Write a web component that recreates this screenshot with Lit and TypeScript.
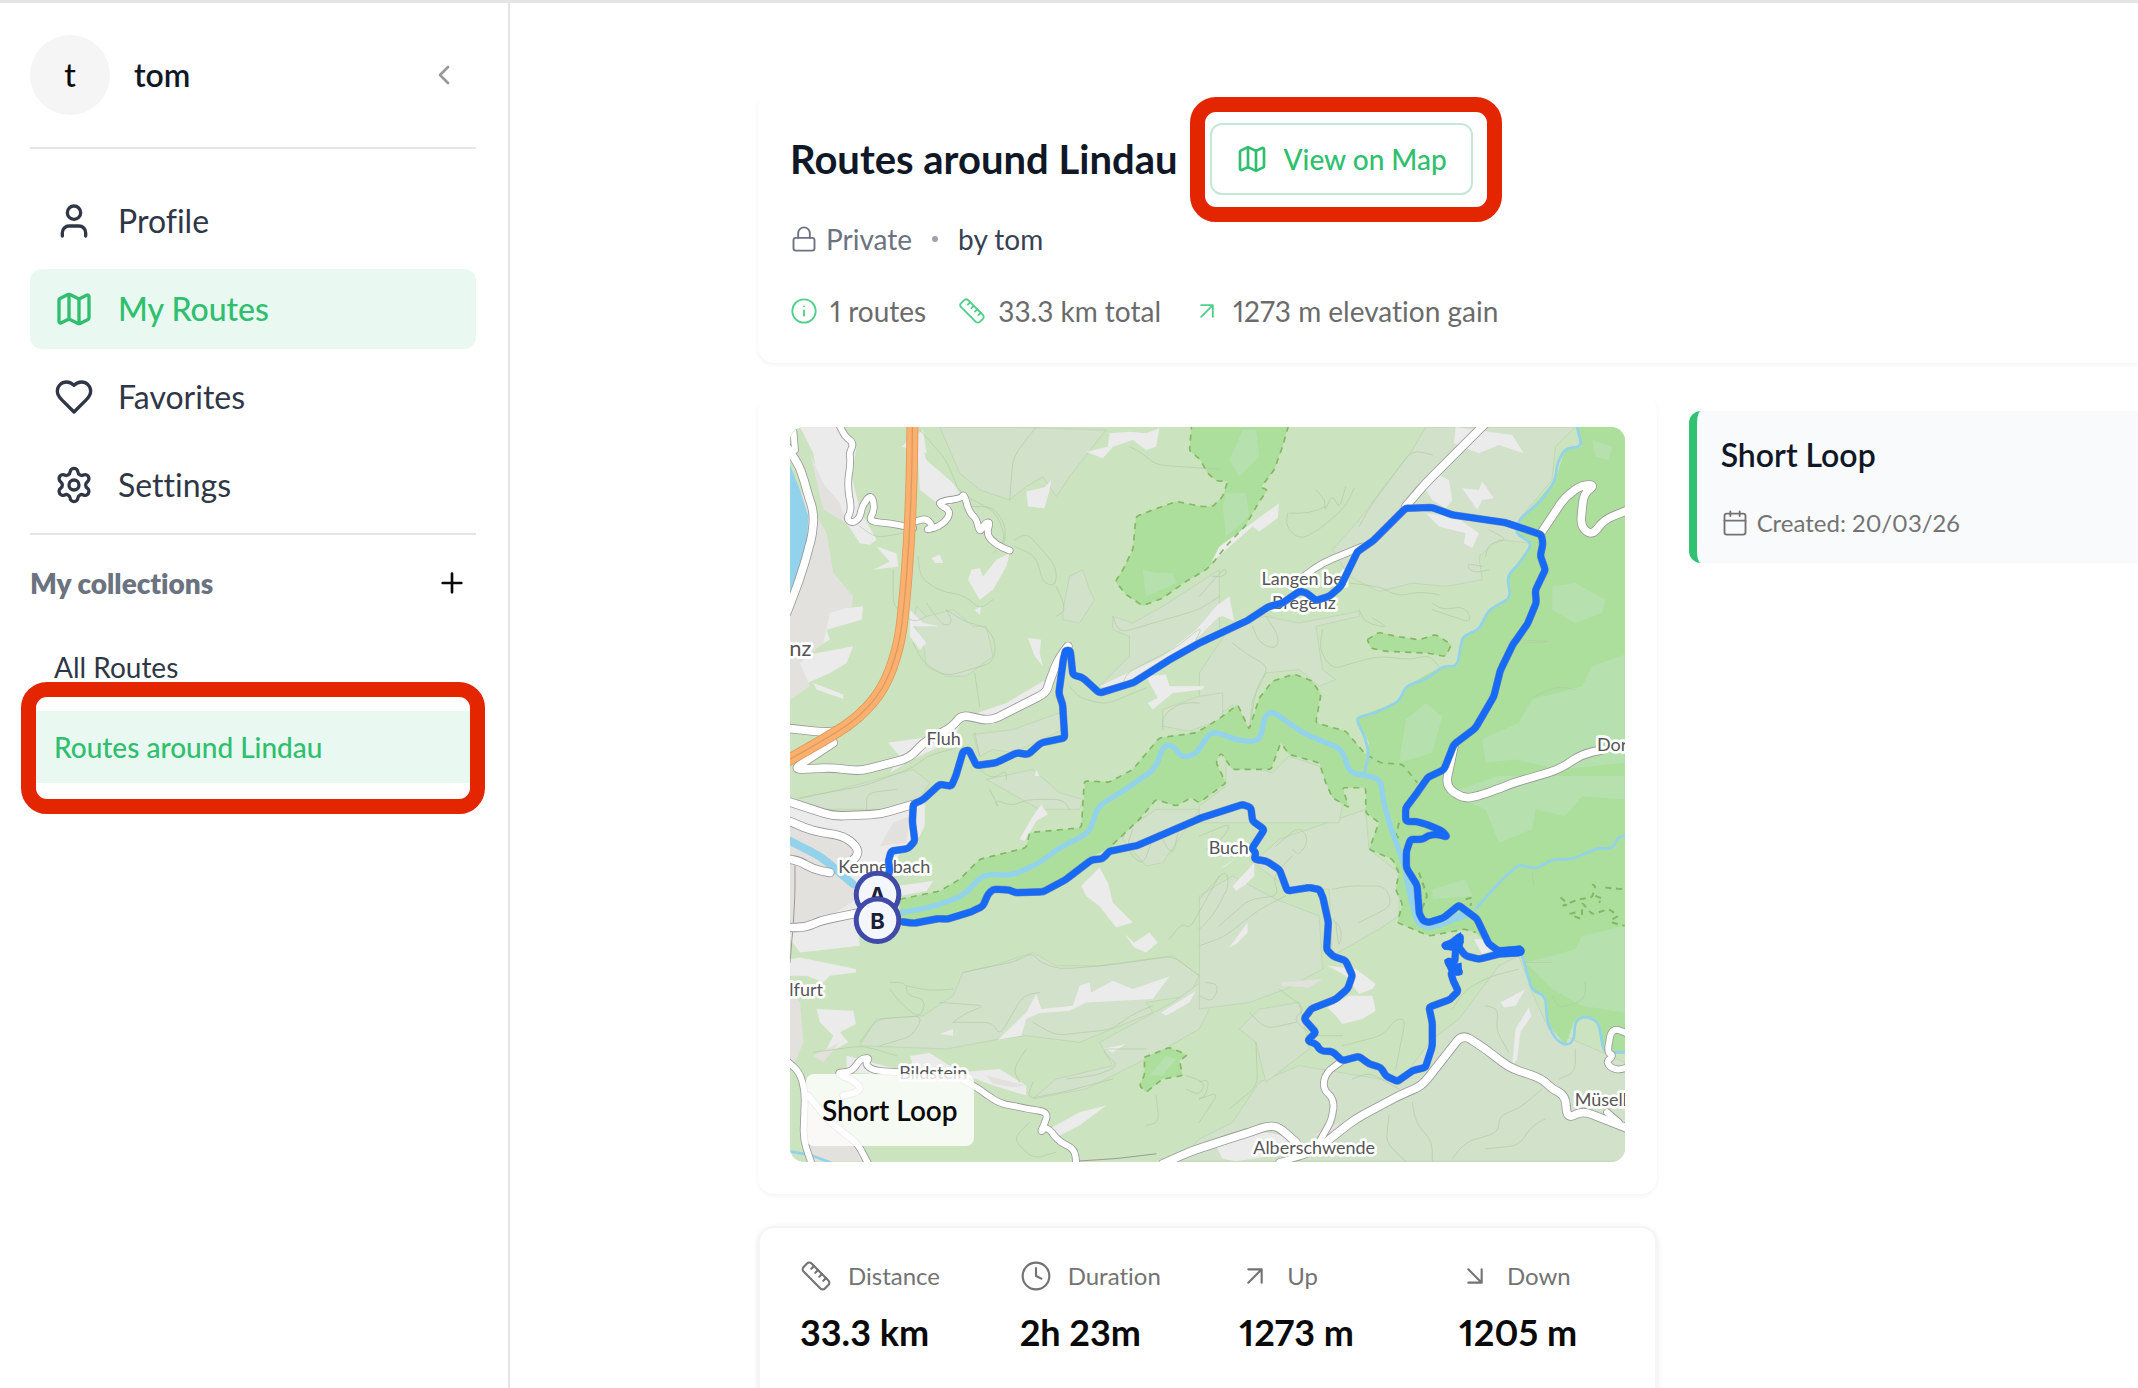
import { LitElement, html, svg, css } from "lit";
import { customElement, property } from "lit/decorators.js";

/* ---------- icons ---------- */

const ICONS = {
  user: svg`<path d="M19 21v-2a4 4 0 0 0-4-4H9a4 4 0 0 0-4 4v2"/><circle cx="12" cy="7" r="4"/>`,
  map: svg`<path d="M14.106 5.553a2 2 0 0 0 1.788 0l3.659-1.83A1 1 0 0 1 21 4.619v12.764a1 1 0 0 1-.553.894l-4.553 2.277a2 2 0 0 1-1.788 0l-4.212-2.106a2 2 0 0 0-1.788 0l-3.659 1.83A1 1 0 0 1 3 19.381V6.618a1 1 0 0 1 .553-.894l4.553-2.277a2 2 0 0 1 1.788 0z"/><path d="M15 5.764v15M9 3.236v15"/>`,
  heart: svg`<path d="M19 14c1.49-1.46 3-3.21 3-5.5A5.5 5.5 0 0 0 16.5 3c-1.76 0-3 .5-4.5 2-1.5-1.5-2.74-2-4.5-2A5.5 5.5 0 0 0 2 8.5c0 2.3 1.5 4.05 3 5.5l7 7Z"/>`,
  settings: svg`<path d="M9.671 4.136a2.34 2.34 0 0 1 4.659 0 2.34 2.34 0 0 0 3.319 1.915 2.34 2.34 0 0 1 2.33 4.033 2.34 2.34 0 0 0 0 3.831 2.34 2.34 0 0 1-2.33 4.033 2.34 2.34 0 0 0-3.319 1.915 2.34 2.34 0 0 1-4.659 0 2.34 2.34 0 0 0-3.32-1.915 2.34 2.34 0 0 1-2.33-4.033 2.34 2.34 0 0 0 0-3.831A2.34 2.34 0 0 1 6.35 6.051a2.34 2.34 0 0 0 3.319-1.915"/><circle cx="12" cy="12" r="3"/>`,
  chevron: svg`<path d="m15 18-6-6 6-6"/>`,
  plus: svg`<path d="M5 12h14M12 5v14"/>`,
  lock: svg`<rect x="3" y="11" width="18" height="11" rx="2"/><path d="M7 11V7a5 5 0 0 1 10 0v4"/>`,
  info: svg`<circle cx="12" cy="12" r="10"/><path d="M12 16v-4.500M12 8h.01"/>`,
  ruler: svg`<path d="M21.3 15.3a2.4 2.4 0 0 1 0 3.4l-2.6 2.6a2.4 2.4 0 0 1-3.4 0L2.7 8.7a2.41 2.41 0 0 1 0-3.4l2.6-2.6a2.41 2.41 0 0 1 3.4 0Z"/><path d="m14.500 12.500 2-2m-5-1 2-2m-5-1 2-2m7 11 2-2"/>`,
  up: svg`<path d="M7 7h10v10M7 17 17 7"/>`,
  down: svg`<path d="m7 7 10 10M17 7v10H7"/>`,
  clock: svg`<circle cx="12" cy="12" r="10"/><path d="M12 6v6l4 2"/>`,
  calendar: svg`<path d="M8 2v4M16 2v4M3 10h18"/><rect x="3" y="4" width="18" height="18" rx="2"/>`,
};
type IconName = keyof typeof ICONS;

@customElement("ui-icon")
export class UiIcon extends LitElement {
  @property() name: IconName = "map";
  @property({ type: Boolean, reflect: true }) thin = false;

  static styles = css`
    :host { display: block; flex: none; width: 32px; height: 32px; }
    svg {
      display: block; width: 100%; height: 100%; fill: none; stroke: currentColor;
      stroke-width: 2; stroke-linecap: round; stroke-linejoin: round;
    }
    :host([thin]) svg { stroke-width: 1.6; }
  `;

  render() {
    return html`<svg viewBox="0 0 24 24" aria-hidden="true">${ICONS[this.name]}</svg>`;
  }
}

/* ---------- map ---------- */

/* The map is digitised in four sheets; each has its own origin on the canvas. */
const SHEETS = { nw: [-30, -51], ne: [1230, -51], sw: [-30, 1089], se: [1230, 1089] };
type Sheet = keyof typeof SHEETS;
type Point = [number, number];

function points(source: string): Point[] {
  let origin = SHEETS.nw;
  const out: Point[] = [];
  for (const token of source.trim().split(/\s+/)) {
    if (token in SHEETS) {
      origin = SHEETS[token as Sheet];
    } else {
      const [x, y] = token.split(",").map(Number);
      out.push([x + origin[0], y + origin[1]]);
    }
  }
  return out;
}

/* Joins the points with straight runs and rounds every bend by up to `radius`. */
function softPath(source: string, radius: number): string {
  const p = points(source);
  let d = `M${p[0]}`;
  for (let i = 1; i < p.length - 1; i++) {
    const [prev, here, next] = [p[i - 1], p[i], p[i + 1]];
    const toward = (q: Point) => {
      const len = Math.hypot(q[0] - here[0], q[1] - here[1]) || 1;
      const t = Math.min(radius, len / 2) / len;
      return [here[0] + (q[0] - here[0]) * t, here[1] + (q[1] - here[1]) * t].map(Math.round);
    };
    d += `L${toward(prev)}Q${here} ${toward(next)}`;
  }
  return `${d}L${p[p.length - 1]}`;
}

const PALE = [
  "ne 480,330 640,120 680,51 1130,51 1070,110 1060,210 960,330 1000,400 900,390 840,440 850,510 740,530 640,520 540,545 450,500 400,420",
  "ne 0,790 60,700 100,640 200,620 300,640 480,605 480,620 350,650 370,780 410,810 360,830 300,780 200,790 160,870 150,960 100,885 40,930 0,900",
  "nw 690,51 980,60 940,110 870,200 830,260 790,200 740,230 690,270 600,240 540,190 480,51",
  "nw 850,600 870,500 910,480 930,540 945,570 900,640 850,630",
  "nw 410,590 440,620 520,600 580,650 620,650 640,740 560,800 500,800 440,770 430,700 400,640",
  "nw 1000,620 1060,640 1150,590 1320,480 1320,680 1050,800 960,830 1050,740 1050,680 1000,660",
  "nw 580,975 700,960 840,910 850,960 700,1030 640,1020 600,1040",
  "nw 50,1170 180,1140 400,1080 450,1120 400,1200 30,1200",
  "nw 1150,900 1260,860 1330,850 1330,930 1230,965 1150,950",
  "nw 620,1110 760,1080 840,1150 910,1170 900,1200 780,1200",
  "sw 550,550 640,530 760,490 830,530 960,530 1180,500 1260,560 1230,620 1100,640 1120,670 900,760 740,740 660,750 500,780 240,770 290,690 430,680 520,620",
  "sw 1320,540 1300,640 1260,720 1120,800 920,900 760,930 830,870 1000,830 960,760 1180,640",
  "sw 1040,120 1130,60 1260,60 1150,220 1100,230 1030,150",
  "se 160,220 240,150 500,60 510,180 600,250 600,380 540,420 400,500 390,300 270,300",
  "se 0,320 100,260 230,330 360,380 370,540 260,600 150,640 0,660",
  "se 100,1000 180,880 300,830 600,880 700,750 780,690 900,530 960,500 1000,610 1050,720 1278,820 1300,1117 -60,1117 0,1050",
  "se 180,660 300,640 330,780 200,880 170,760 120,720",
  "ne 80,1050 220,1090 270,1040 360,1070 430,1190 420,1240 0,1240 0,1190 80,1130",
];
const PARK = [
  "nw 1237,40 1230,122 1262,148 1285,190 1310,212 ne 85,215 70,260 40,290 10,290 nw 1190,275 1120,300 1070,320 1060,420 1030,480 1008,515 1040,555 1090,588 1150,565 1220,515 1280,480 ne 40,460 80,410 140,345 180,275 205,240 185,232 225,180 250,110 270,40",
  "nw 915,1115 990,1118 1060,1080 1140,985 1250,970 ne 60,928 115,885 150,960 180,865 220,815 285,793 340,815 365,855 350,940 440,965 500,1035 510,1000 470,925 600,875 620,830 730,770 775,770 790,680 840,660 870,600 935,565 925,500 1000,400 950,370 960,335 1070,210 1100,115 1150,110 1135,40 1300,40 se 1300,795 1215,790 1200,700 1160,680 1125,700 1100,770 1045,700 1040,620 1000,605 970,485 870,470 830,430 800,420 690,440 595,400 610,345 590,300 600,250 580,210 510,180 540,100 500,70 500,-5 430,-5 450,55 400,25 ne 380,1120 360,1060 270,1035 245,1000 215,1080 100,1080 65,1030 50,1060 80,1120 0,1180 sw 1235,25 1190,50 1130,30 1080,90 1000,170 930,205 860,270 800,300 640,300 600,355 500,390 360,395 360,330 480,305 540,270 600,210 740,175 750,130 905,115 915,0",
  "ne 505,690 540,668 590,680 660,690 710,675 758,705 740,740 680,730 560,725 515,715",
  "sw 1095,805 1170,775 1225,798 1200,815 1210,860 1150,870 1100,910 1080,890 1095,860",
];
/* Protected-area limits: only the stretches that carry a dashed line. */
const LIMITS = [
  "nw 1237,40 1230,122 1262,148 1285,190 1310,212 ne 85,215 70,260 40,290 10,290 nw 1190,275 1120,300 1070,320 1060,420 1030,480 1008,515 1040,555 1090,588 1150,565 1220,515 1280,480 ne 40,460 80,410 140,345 180,275 205,240 185,232 225,180 250,110 270,40",
  "sw 360,330 480,305 540,270 600,210 740,175 750,130 905,115 nw 915,1115 990,1118 1060,1080 1140,985 1250,970 ne 60,928 115,885 150,960 180,865 220,815 285,793 340,815 365,855 350,940 440,965 500,1035 545,1060 610,1065 655,1120",
  "sw 1000,165 1080,90 1130,30 1190,50 1235,25 ne 0,1180 80,1120 50,1060 65,1030 100,1080 215,1080 245,1000 270,1035 360,1060 380,1120 se 400,25 450,55 430,-5 500,-5 500,70 540,100 510,180 580,210 600,250 590,300 610,345 595,400 690,440 800,420 830,430",
  "ne 505,690 540,668 590,680 660,690 710,675 758,705 740,740 680,730 560,725 515,715 505,690",
  "sw 1095,805 1170,775 1225,798 1200,815 1210,860 1150,870 1100,910 1080,890 1095,860 1095,805",
];
const WOOD = [
  "ne 1278,735 1180,770 1150,830 1000,870 960,940 850,990 860,1060 950,1050 1080,1080 1278,1060",
  "ne 1060,530 1130,520 1220,570 1210,610 1130,640 1060,600",
  "ne 620,930 680,880 730,920 700,1030 600,1060",
  "ne 1180,90 1240,110 1230,150 1190,140",
  "se 1278,410 1150,440 1130,480 980,520 1060,600 1150,650 1278,670",
  "se 750,10 860,60 900,160 1000,120 1010,60 1100,80 1150,20 1278,30 1278,-40 900,-40",
  "ne 130,60 170,60 180,140 120,200 90,150",
  "ne 80,250 140,250 150,320 80,380 70,290",
  "nw 1090,480 1130,490 1180,490 1190,520 1100,560",
  "se 700,300 800,270 820,320 700,330",
  "sw 1110,860 1160,800 1190,810 1150,860",
];
const BUILT = [
  "nw 60,51 180,51 230,110 215,200 240,300 290,390 270,405 240,400 200,340 170,300 120,260 100,130",
  "nw 130,600 250,590 245,630 140,660 150,690 60,740 220,710 200,760 150,790 60,830 30,850 30,700",
  "nw 100,820 190,855 190,868 110,840",
  "nw 410,60 440,150 520,220 540,250 500,300 460,270 420,240",
  "nw 365,110 400,80 430,60 440,130",
  "nw 740,245 795,232 815,210 810,240 795,295 745,290",
  "nw 920,125 985,110 990,70 1050,65 1100,70 1140,55 1130,110 1100,120 1060,90 1000,110 970,145",
  "nw 575,480 600,475 610,500 650,450 690,430 680,470 640,540 600,570 565,510",
  "nw 280,480 330,455 290,410 350,430 355,470",
  "nw 455,445 480,435 490,460 465,460",
  "nw 585,600 605,590 600,615",
  "nw 745,685 785,690 780,730 790,770 765,740",
  "nw 390,600 430,640 480,650 400,650 440,700 420,720 390,680",
  "nw 580,915 680,880 790,815 820,830 700,900 640,945",
  "nw 960,830 1150,740 1250,660 1320,580 1320,620 1240,700 1180,740 1010,845",
  "nw 1100,800 1160,795 1170,830 1275,830 1270,840 1180,850 1120,900 1105,880 1135,865",
  "nw 325,1000 430,985 550,930 520,990 400,1050 330,1090 360,1040",
  "nw 770,1080 780,1100 765,1100",
  "ne 770,51 940,75 975,130 900,105 840,130 765,100",
  "ne 680,240 720,195 750,210 760,270 740,295 700,270",
  "ne 790,235 840,240 850,215 885,265 850,270 835,300",
  "ne 680,310 770,320 840,370 820,415 795,400 800,370 720,350",
  "ne 35,460 60,410 130,360 240,280 235,325 180,365 160,350",
  "ne 0,655 50,590 90,560 105,635 70,620 30,630",
  "sw 30,50 160,80 400,50 435,40 435,110 410,160 360,190 330,250 350,290 460,275 440,305 360,320 230,400 240,470 60,490 30,450",
  "sw 60,505 228,540 228,550 150,560 130,580 80,560 30,560 30,510",
  "sw 110,660 220,665 228,705 180,730 205,760 130,800 160,740 120,700",
  "sw 905,290 960,235 985,280 1000,340 1060,400 1010,415 960,350 920,320",
  "sw 1035,435 1065,460 1110,430 1135,460 1100,490 1065,475",
  "sw 900,590 930,580 935,610 1000,575 1060,600 1170,562 1120,630 920,640 870,665 780,672 740,690 725,740 655,752 740,670 770,615 785,660 880,650",
  "sw 1145,670 1250,605 1230,640 1160,680",
  "sw 480,735 520,720 520,740",
  "sw 390,800 450,792 540,850 660,840 740,890 740,920 640,890 560,860 400,830",
  "sw 810,1020 900,970 980,950 900,1010 830,1045",
  "sw 760,80 785,45 805,75 770,95 735,155 720,150",
  "sw 200,800 350,840 350,860 200,850",
  "sw 970,780 1040,765 1000,790",
  "se 385,530 470,540 530,585 520,600 480,615 440,560",
  "se 385,655 450,620 520,620 530,665 490,690 430,705 410,680",
  "se 100,290 165,220 165,260 140,285 110,305",
  "se 90,475 145,400 145,430 110,465",
  "se 60,240 110,205 80,230",
  "se 825,450 850,450 880,485 850,495",
  "se 50,1070 200,1030 300,1050 290,1090 110,1117 70,1110",
  "se 940,830 950,720 990,655 998,680 965,730 955,810",
  "se 905,640 980,600 950,650 915,655",
];
const TOWN = [
  "nw 90,130 130,220 180,280 200,340 130,300",
  "nw 30,200 100,300 140,370 160,490 220,560 215,590 150,610 130,700 60,760 90,830 30,870",
  "sw 30,105 90,120 210,170 230,210 200,250 230,330 120,400 30,420",
  "sw 340,100 390,80 380,160 300,170",
  "sw 30,600 60,640 70,760 40,830 30,820",
  "sw 90,930 240,1060 260,1117 90,1117 75,1050",
  "sw 100,800 180,760 130,820",
  "sw 620,860 740,890 700,895 640,885",
  "se 245,580 370,570 330,595 250,590",
  "se 340,1040 420,1000 400,1040",
];
const CONTOURS = [
  "nw 420,60 500,150 540,250 600,280 650,310 680,390 640,430",
  "nw 560,290 640,290 680,350 670,420",
  "nw 690,270 700,140 770,51",
  "nw 1050,110 1090,130 1130,165 1320,178",
  "nw 705,390 740,370 770,400 830,470 830,530 790,520 770,440 705,410",
  "nw 830,530 860,600 830,620",
  "nw 1000,620 1020,670 1120,640 1260,600 1320,560",
  "nw 415,440 420,500 470,540 560,560 600,600 640,570",
  "nw 500,600 560,640 620,650 650,700 640,760 500,800 430,760 400,700",
  "nw 440,580 490,650 520,640 500,600",
  "nw 585,790 600,890",
  "nw 585,970 600,1040",
  "nw 340,480 340,590 400,640 440,620",
  "nw 870,830 900,865 980,885 1100,835",
  "nw 60,1165 250,1130 400,1075 440,1040 550,1010",
  "nw 260,1200 260,1150 350,1140",
  "nw 600,1080 640,1110 680,1080 680,1110",
  "nw 240,350 290,385 370,370",
  "nw 1150,960 1150,920 1200,880 1260,880",
  "nw 1030,830 1040,790 1180,720 1270,650 1250,690",
  "ne 0,560 80,470 80,500 40,500",
  "ne 265,310 260,350 300,390 360,360 440,290 465,235",
  "ne 350,240 380,270 375,310 400,250 420,300 440,230",
  "ne 480,350 520,280 640,120 700,135",
  "ne 270,310 330,310 380,290",
  "ne 450,520 540,530 600,560 660,545 720,555",
  "ne 700,580 730,600 800,590 820,640 760,620 700,600",
  "ne 480,600 500,640 570,655 520,625",
  "ne 370,660 360,720 400,780 460,760 540,740 640,750 690,735 720,770",
  "ne 100,700 150,740 210,770 170,840 150,960",
  "ne 200,620 240,680 230,720 180,700 160,650",
  "ne 850,470 800,460 820,490 870,480",
  "ne 870,360 930,390 870,400 860,440",
  "ne 940,690 1060,695 980,700",
  "ne 1010,860 1070,830 1130,840",
  "sw 630,0 660,60 640,30 700,50 740,30 850,30 870,60",
  "sw 550,550 640,530 700,520 760,490 780,520 840,540 970,530 1050,520 1180,500 1260,560",
  "sw 330,580 380,580 380,620 440,630 420,690 360,640 330,600",
  "sw 380,590 450,605 520,600",
  "sw 240,760 290,690 430,680 400,740 300,770",
  "sw 480,640 620,650 560,670 520,700",
  "sw 520,700 640,700 660,740 730,620 780,610",
  "sw 760,700 830,740 1000,720 1050,680 1120,650",
  "sw 740,780 700,840 720,880",
  "sw 100,790 250,770 350,800",
  "sw 750,1000 700,1050 760,1110 830,1090",
  "sw 860,870 950,860 1020,830 960,780 1100,780",
  "sw 760,880 740,930 850,910 1000,870",
  "sw 1280,580 1320,585 1300,640 1260,620",
  "sw 1170,450 1210,400 1230,420 1320,260",
  "sw 1130,920 1140,1000 1100,1010",
  "sw 1060,120 1040,180 1090,230 1130,120 1180,200 1200,110",
  "sw 1220,860 1280,880 1260,920 1220,900",
  "se 0,140 100,100 60,160 20,180",
  "se 230,170 300,110 330,150 300,200 280,180",
  "se 0,330 80,240 90,290 40,380 0,420",
  "se 60,410 150,330 240,320 220,260 280,200",
  "se 0,470 80,440 180,360 260,320",
  "se 400,300 450,290 560,290 580,350 480,400",
  "se 400,390 430,420 420,480 410,400",
  "se 170,760 175,890 90,960",
  "se 240,600 320,660 280,690 340,740 430,740",
  "se 150,670 200,720 290,700",
  "se 430,770 550,740 590,690 620,690 590,840",
  "se 460,870 510,850 600,900",
  "se 640,940 650,1000 700,1060 700,1117",
  "se 570,980 560,1060 620,1117",
  "se 760,660 800,600 880,560 960,540",
  "se 860,650 900,660 890,720 930,790",
  "se 1060,620 1080,660 1160,630 1160,580",
  "se 1130,780 1130,850 1080,870",
  "se 1030,900 960,960 900,980 900,1030 800,1060 760,1110",
  "se 860,1080 960,1070 1000,1010 1040,990",
  "se 0,880 30,870 20,920 0,930",
  "se 1000,250 1005,290",
  "se 980,520 1060,520",
  "se 0,1000 60,910 0,930",
];
const MARSH = [
  "se 1085,325 1110,345 1090,350 1140,330 1180,325 1190,290 1180,285",
  "se 1130,370 1110,375 1150,390 1150,340 1180,375 1230,360 1260,380 1230,395",
  "se 1190,320 1215,330 1200,340",
  "se 1220,295 1270,300 1275,290",
  "se 1240,400 1278,410",
  "se 660,250 685,320 660,380",
  "se 800,330 820,325 815,350",
  "se 600,100 590,140 610,150",
];
const STREAMS = [
  "ne 1132,40 1150,110 1100,115 1075,160 1070,210 1030,270 960,330 950,370 1000,400 970,450 925,500 935,565 870,600 840,660 790,680 775,770 730,770 690,805 620,830 600,875 530,910 470,925 500,990 510,1040 495,1090",
  "se 830,360 900,280 960,225 1010,240 1060,210 1120,210 1200,175 1240,180 1260,140 1290,140",
  "se 970,500 1000,605 1040,620 1045,700 1070,750 1100,770 1125,755 1130,695 1160,680 1200,700 1215,790 1290,790",
  "sw 20,1086 90,1098 150,1120",
];
const RIVERS = [
  "sw 360,370 450,355 550,320 610,255 700,258 790,215 830,180 930,130 955,50 1040,0 nw 1130,1075 1150,1010 1180,1005 1205,1045 1250,1035 1290,970 ne 60,970 110,992 180,998 200,910 225,908 310,970 430,1020 450,1090 500,1098 545,1110 550,1160 se 570,100 620,240 640,330 660,410 700,410 760,390 830,370 850,440 890,480",
];
const WIDE_RIVERS = ["sw 20,150 120,200 220,285", "se 625,260 642,340 660,405 700,412 760,388 810,372"];
const ROADS = [
  "nw 178,45 195,80 222,100 208,130 212,150 203,230 215,300 200,325 215,340 240,325 245,290 275,250 285,300 265,335 330,340 400,355",
  "nw 405,335 440,325 460,350 435,362 490,345 515,305 480,285 480,275 545,265 552,250 570,310 590,325 600,370 615,340 632,335 620,375 650,405 690,422",
  "nw 38,40 45,120",
  "sw 20,815 60,850 75,910 70,1050 95,1125",
  "sw 85,920 150,1000 235,1065 265,1125",
  "sw 190,920 245,905 230,880 165,850 215,850 240,810 270,805 255,825 280,845 360,850",
  "sw 545,870 600,900 650,940 740,960 810,970 780,1035 800,1010 840,1060 885,1080 890,1125",
  "se 430,815 380,850 370,900 405,930 400,990 360,1060",
  "se 1290,735 1240,715 1225,790 1245,800 1220,820 1250,845 1290,835",
  "se 1225,970 1260,1000",
  "se 240,1120 330,1095 370,1060",
  "ne 490,410 370,460 320,495",
];
const MAIN_ROADS = [
  "nw 20,110 60,170 80,240 102,310 98,370 80,440 55,520 20,610",
  "nw 20,956 130,968 165,965",
  "nw 160,1000 38,1080 160,1075 240,1085 390,1045 430,1000 520,950 545,915 630,935 800,850 808,820 835,750 865,710",
  "sw 20,35 160,80 300,75 400,45",
  "sw 20,92 100,125 190,140 230,170 235,200 200,225",
  "sw 20,208 60,215 100,240 150,250",
  "sw 20,415 75,415 120,395 230,372",
  "ne 860,40 680,220 620,290",
  "ne 1030,365 1100,260 1150,225 1190,225 1155,250 1145,350 1180,378 1215,330 1290,300",
  "ne 765,1010 740,1130 795,1170 870,1150 930,1125 1080,1080 1150,1035 1215,1020",
  "se -110,1125 -20,1085 120,1040 210,1010 240,1015 290,1060",
  "se 380,1060 470,990 600,920 670,890 790,735 860,780 930,835 1030,870 1060,900 1100,920 1105,990 1150,965 1290,1020",
];
const TRACKS = ["sw 45,230 45,320 38,430 30,520", "sw 890,1117 1000,1110 1130,1095"];
const MOTORWAY = "nw 398,40 396,200 388,400 372,600 355,720 310,840 240,920 160,975 20,1055";
const LAKE = "nw 30,165 60,240 85,320 80,420 30,545";
const ROUTE =
  "sw 325,260 330,240 325,215 335,185 385,178 405,155 398,100 400,45 430,30 480,-15 515,-10 530,-45 nw 550,1025 568,1022 590,1068 650,1060 710,1030 745,1035 785,1000 855,985 850,890 838,850 850,760 857,722 872,722 880,795 910,805 960,850 1060,820 1180,745 1260,700 ne 140,635 210,590 250,580 300,545 320,548 350,572 390,560 425,530 475,425 520,395 620,295 700,293 760,315 920,338 1028,375 1032,400 1025,440 1040,480 1010,540 1012,580 985,645 945,700 905,780 885,860 830,955 765,1005 735,1080 685,1105 655,1150 620,1195 se 620,95 660,98 690,108 730,125 745,143 715,135 690,138 670,150 635,150 622,185 622,235 655,290 660,370 672,395 690,400 735,385 780,348 835,390 870,465 900,485 965,480 968,490 900,495 840,510 800,500 780,475 785,440 760,460 735,470 770,475 768,520 745,515 765,545 785,548 755,550 765,580 778,605 755,630 690,655 700,700 700,770 680,835 640,845 595,878 560,860 545,835 510,825 480,802 430,815 400,788 365,785 350,765 325,755 350,730 315,690 335,660 410,630 445,600 460,560 440,515 400,500 382,480 388,400 370,320 360,300 330,295 265,305 240,240 200,215 165,210 170,190 158,178 195,120 160,95 155,55 130,45 0,88 sw 1070,170 990,185 970,208 935,212 860,270 790,308 705,310 690,302 640,300 625,315 610,350 575,368 500,390 480,388 400,402 370,398";
/* Hairpins whose two legs merge into one blot at this scale. */
const HAIRPINS = [
  "se 785,428 795,460 780,480 735,482 727,467 760,455",
  "se 735,512 755,508 765,525 788,520 790,558 765,550 748,545",
  "se 880,478 965,468 976,485 962,500 890,500",
];

const LABELS: [string, string][] = [
  ["nw 440,1008", "Fluh"],
  ["ne 187,527", "Langen bei"],
  ["ne 218,597", "Bregenz"],
  ["ne 1195,1025", "Dor"],
  ["sw 175,250", "Kennelbach"],
  ["sw 28,620", "lfurt"],
  ["sw 358,870", "Bildstein"],
  ["se 28,195", "Buch"],
  ["se 162,1095", "Alberschwende"],
  ["se 1128,950", "Müselb"],
];
const MARKERS: [string, string][] = [
  ["sw 293,316", "A"],
  ["sw 293,393", "B"],
];

const polys = (list: string[], cls: string) =>
  list.map((p) => svg`<polygon class=${cls} points=${points(p).join(" ")}></polygon>`);
const lines = (list: string[], cls: string, radius = 30) =>
  list.map((p) => svg`<path class="line ${cls}" d=${softPath(p, radius)}></path>`);

@customElement("route-map")
export class RouteMap extends LitElement {
  @property() caption = "";

  static styles = css`
    :host { display: block; position: relative; overflow: hidden; border-radius: 14px; }
    svg { display: block; width: 100%; height: auto; background: #cbe4bf; }
    .line { fill: none; stroke-linejoin: round; stroke-linecap: round; }
    .pale { fill: #d2e1ca; stroke: #b9d0ad; stroke-width: 2; }
    .park { fill: #acdf9b; }
    .limit { stroke: #83b763; stroke-width: 5; stroke-dasharray: 18 16; stroke-linecap: butt; }
    .wood { fill: #b6e0ad; }
    .built { fill: #ebebeb; }
    .town { fill: #e3e1dd; }
    .contour { stroke: #b0caa4; stroke-width: 2; }
    .marsh { stroke: #83b763; stroke-width: 6; stroke-dasharray: 18 14; stroke-linecap: butt; }
    .lake { fill: #92d2ea; }
    .stream { stroke: #92d2ea; stroke-width: 8; }
    .river { stroke: #92d2ea; stroke-width: 16; }
    .river-wide { stroke: #92d2ea; stroke-width: 24; }
    .track { stroke: #999999; stroke-width: 3; }
    .casing { stroke: #999999; stroke-width: 23; }
    .road { stroke: #ffffff; stroke-width: 18; }
    .casing-main { stroke: #999999; stroke-width: 28; }
    .road-main { stroke: #ffffff; stroke-width: 23; }
    .motor-casing { stroke: #e09a5c; stroke-width: 36; }
    .motor { stroke: #fbb06d; stroke-width: 31; }
    .motor-line { stroke: #dc9a63; stroke-width: 4; }
    .route-casing { stroke: #7f90b5; stroke-width: 23; }
    .route { stroke: #176af6; stroke-width: 20; }
    .hairpin { fill: #176af6; }
    .label {
      font-family: Lato, "Noto Sans", sans-serif; font-size: 54px; fill: #555555;
      font-variant-ligatures: none;
      stroke: #ffffff; stroke-width: 16; stroke-linejoin: round; paint-order: stroke;
    }
    .label-city { font-size: 66px; }
    .pin { fill: #f3f6fd; stroke: #404aa8; stroke-width: 15; }
    .pin-text { font-family: Inter, sans-serif; font-size: 66px; font-weight: 700; fill: #1a2036; text-anchor: middle; }
    .caption {
      position: absolute; left: 16px; bottom: 16px; padding: 16px;
      background: rgba(255, 255, 255, 0.8); border-radius: 8px;
      font-size: 28px; line-height: 40px; font-weight: 600; color: #0a0a0a;
    }
  `;

  private label([at, text]: [string, string], cls: string) {
    const [[x, y]] = points(at);
    return svg`<text class=${cls} x=${x} y=${y}>${text}</text>`;
  }

  private marker([at, text]: [string, string]) {
    const [[x, y]] = points(at);
    return svg`<circle class="pin" cx=${x} cy=${y} r="64"></circle><text class="pin-text" x=${x} y=${y + 25}>${text}</text>`;
  }

  render() {
    return html`
      <svg viewBox="0 0 2508 2208" role="img" aria-label="Map of ${this.caption}">
        ${polys(PALE, "pale")} ${polys(PARK, "park")} ${polys(WOOD, "wood")}
        ${polys(BUILT, "built")} ${polys(TOWN, "town")} ${lines(CONTOURS, "contour")}
        ${lines(LIMITS, "limit", 8)} ${lines(MARSH, "marsh", 8)}
        ${polys([LAKE], "lake")} ${lines(STREAMS, "stream", 20)}
        ${lines(RIVERS, "river")} ${lines(WIDE_RIVERS, "river-wide")}
        ${lines(TRACKS, "track")}
        ${lines(ROADS, "casing")} ${lines(MAIN_ROADS, "casing-main")}
        ${lines(ROADS, "road")} ${lines(MAIN_ROADS, "road-main")}
        ${lines([MOTORWAY], "motor-casing", 200)} ${lines([MOTORWAY], "motor", 200)}
        ${lines([MOTORWAY], "motor-line", 200)}
        ${LABELS.map((l) => this.label(l, "label"))}
        ${this.label(["nw 28,738", "nz"], "label label-city")}
        ${lines([ROUTE], "route-casing", 8)} ${lines([ROUTE], "route", 8)}
        ${polys(HAIRPINS, "hairpin")}
        ${MARKERS.map((m) => this.marker(m))}
      </svg>
      <div class="caption">${this.caption}</div>
    `;
  }
}

/* ---------- page ---------- */

const NAV: { icon: IconName; label: string; active?: boolean }[] = [
  { icon: "user", label: "Profile" },
  { icon: "map", label: "My Routes", active: true },
  { icon: "heart", label: "Favorites" },
  { icon: "settings", label: "Settings" },
];
const TOTALS: { icon: IconName; text: string }[] = [
  { icon: "info", text: "1 routes" },
  { icon: "ruler", text: "33.3 km total" },
  { icon: "up", text: "1273 m elevation gain" },
];
const SUMMARY: { icon: IconName; label: string; value: string }[] = [
  { icon: "ruler", label: "Distance", value: "33.3 km" },
  { icon: "clock", label: "Duration", value: "2h 23m" },
  { icon: "up", label: "Up", value: "1273 m" },
  { icon: "down", label: "Down", value: "1205 m" },
];

@customElement("app-root")
export class AppRoot extends LitElement {
  static styles = css`
    :host {
      display: flex; box-sizing: border-box; height: 100vh; overflow: hidden;
      border-top: 3px solid #e5e5e5; background: #ffffff; color: #0a0a0a;
      font-family: Lato, "Open Sans", sans-serif; font-size: 28px; line-height: 40px;
      font-variant-ligatures: none; font-variant-numeric: proportional-nums;
    }
    * { box-sizing: border-box; }
    a { color: inherit; text-decoration: none; }
    button { font: inherit; color: inherit; background: none; border: 0; padding: 0; cursor: pointer; }
    h1, h2, h3, p, ul, dl, dd { margin: 0; padding: 0; }
    ul { list-style: none; }

    .sidebar { flex: none; width: 510px; padding: 32px 32px 32px 30px; border-right: 2px solid #e5e5e5; }
    .user { display: flex; align-items: center; gap: 24px; padding-right: 16px; }
    .avatar {
      display: grid; place-items: center; width: 80px; height: 80px;
      border-radius: 50%; background: #f5f5f5; font-size: 32px; font-weight: 500;
    }
    .name { flex: 1; font-size: 32px; font-weight: 600; color: #101828; }
    .collapse { color: #999999; }
    .rule { height: 2px; margin: 32px 0; border: 0; background: #e5e5e5; }
    .rule-tight { margin: 8px 0 0; }
    .nav { display: flex; flex-direction: column; gap: 8px; }
    .nav-link {
      display: flex; align-items: center; gap: 24px; height: 80px; padding: 0 24px;
      border-radius: 12px; font-size: 32px; color: #2f3747;
    }
    .nav-link ui-icon { width: 40px; height: 40px; }
    .active { background: #e9f8f1; color: #2fbf6e; font-weight: 500; }
    .group { display: flex; align-items: center; justify-content: space-between; height: 96px; padding-right: 8px; }
    .group-title { font-size: 28px; font-weight: 800; color: #6b7280; }
    .collections { display: flex; flex-direction: column; gap: 8px; }
    .collection { position: relative; display: flex; align-items: center; height: 72px; padding: 0 24px; color: #2f3747; }
    .collection.active { color: #2fbf6e; }
    .ring { position: absolute; border: 15px solid #e32600; border-radius: 26px; pointer-events: none; z-index: 1; }
    .ring-collection { inset: -29px -9px -31px -9px; }
    .ring-button { inset: -26px -29px -27px -20px; }

    .main { flex: 1; min-width: 0; padding: 88px 0 0 248px; }
    .card { background: #ffffff; border-radius: 16px; padding: 32px; box-shadow: 0 2px 4px rgba(0, 0, 0, 0.05); }
    .header { display: flex; flex-direction: column; border-radius: 16px 0 0 16px; }
    .title-row { display: flex; align-items: center; gap: 32px; }
    .title { font-size: 40px; line-height: 48px; font-weight: 700; color: #101828; white-space: nowrap; }
    .highlight { position: relative; flex: none; }
    .map-button {
      display: flex; align-items: center; gap: 16px; height: 72px; padding: 0 24px;
      border: 2px solid #c5e8d6; border-radius: 12px; font-weight: 500; color: #2fbf6e; white-space: nowrap;
    }
    .meta { display: flex; align-items: center; gap: 20px; margin-top: 24px; color: #6b7280; }
    .meta-item { display: flex; align-items: center; gap: 8px; }
    .meta ui-icon, .total ui-icon, .created ui-icon { width: 28px; height: 28px; }
    .dot { width: 6px; height: 6px; border-radius: 50%; background: #9ca3af; }
    .author { color: #374151; }
    .totals { display: flex; gap: 32px; margin-top: 32px; color: #6b6b6b; }
    .total { display: flex; align-items: center; gap: 12px; }
    .total ui-icon { color: #4fd08a; }

    .columns { display: grid; grid-template-columns: minmax(0, 2fr) minmax(0, 1fr); gap: 32px; margin-top: 32px; }
    .left { display: flex; flex-direction: column; gap: 32px; }
    .summary {
      display: grid; grid-template-columns: repeat(4, minmax(0, 1fr)); column-gap: 64px;
      padding: 32px 40px 64px; border: 2px solid #f5f5f5; box-shadow: 0 2px 6px rgba(0, 0, 0, 0.1);
    }
    .fact { display: flex; flex-direction: column; gap: 16px; white-space: nowrap; }
    .fact-label { display: flex; align-items: center; gap: 16px; font-size: 24px; line-height: 32px; color: #737373; }
    .fact-value { font-size: 36px; line-height: 48px; font-weight: 700; }
    .routes { padding-top: 16px; }
    .route-card {
      display: flex; flex-direction: column; gap: 28px; padding: 24px 24px 20px;
      border-left: 8px solid #31c371; border-radius: 12px 0 0 12px; background: #f9fafb;
    }
    .route-name { font-size: 32px; line-height: 40px; font-weight: 600; color: #101828; }
    .created { display: flex; align-items: center; gap: 8px; font-size: 24px; color: #737373; }
  `;

  private renderSidebar() {
    return html`
      <aside class="sidebar">
        <div class="user">
          <div class="avatar">t</div>
          <div class="name">tom</div>
          <button class="collapse" type="button" aria-label="Collapse sidebar"><ui-icon name="chevron"></ui-icon></button>
        </div>
        <hr class="rule" />
        <nav class="nav">
          ${NAV.map(
            (n) => html`<a class="nav-link ${n.active ? "active" : ""}" href="#"><ui-icon .name=${n.icon}></ui-icon>${n.label}</a>`,
          )}
        </nav>
        <hr class="rule rule-tight" />
        <div class="group">
          <h2 class="group-title">My collections</h2>
          <button type="button" aria-label="Add collection"><ui-icon name="plus"></ui-icon></button>
        </div>
        <ul class="collections">
          <li><a class="collection" href="#">All Routes</a></li>
          <li><a class="collection active" href="#">Routes around Lindau<span class="ring ring-collection"></span></a></li>
        </ul>
      </aside>
    `;
  }

  private renderHeader() {
    return html`
      <header class="card header">
        <div class="title-row">
          <h1 class="title">Routes around Lindau</h1>
          <div class="highlight">
            <button class="map-button" type="button"><ui-icon name="map"></ui-icon><span>View on Map</span></button>
            <span class="ring ring-button"></span>
          </div>
        </div>
        <div class="meta">
          <span class="meta-item"><ui-icon name="lock" thin></ui-icon>Private</span>
          <span class="dot"></span>
          <span class="author">by tom</span>
        </div>
        <ul class="totals">
          ${TOTALS.map((t) => html`<li class="total"><ui-icon thin .name=${t.icon}></ui-icon>${t.text}</li>`)}
        </ul>
      </header>
    `;
  }

  render() {
    return html`
      ${this.renderSidebar()}
      <main class="main">
        ${this.renderHeader()}
        <div class="columns">
          <div class="left">
            <section class="card"><route-map caption="Short Loop"></route-map></section>
            <dl class="card summary">
              ${SUMMARY.map(
                (s) => html`<div class="fact">
                  <dt class="fact-label"><ui-icon thin .name=${s.icon}></ui-icon>${s.label}</dt>
                  <dd class="fact-value">${s.value}</dd>
                </div>`,
              )}
            </dl>
          </div>
          <section class="routes">
            <article class="route-card">
              <h3 class="route-name">Short Loop</h3>
              <p class="created"><ui-icon name="calendar" thin></ui-icon>Created: 20/03/26</p>
            </article>
          </section>
        </div>
      </main>
    `;
  }
}
